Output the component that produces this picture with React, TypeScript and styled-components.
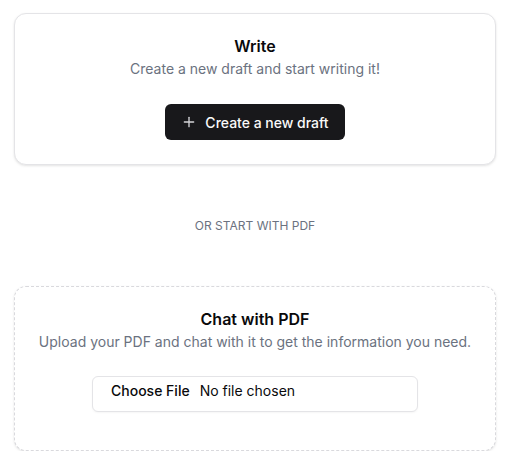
import React from "react";
import styled, { createGlobalStyle } from "styled-components";
import { Plus } from "lucide-react";

const GlobalStyle = createGlobalStyle`
  html, body {
    margin: 0;
    padding: 0;
    background: #ffffff;
  }
  body {
    font-family: Inter, "Noto Sans", "Liberation Sans", sans-serif;
    color: #09090b;
    -webkit-font-smoothing: antialiased;
  }
  * {
    box-sizing: border-box;
  }
`;

const Page = styled.main`
  width: 482px;
  margin: 13px 0 0 14px;
  display: flex;
  flex-direction: column;
`;

const Card = styled.section<{ $dashed?: boolean }>`
  display: flex;
  flex-direction: column;
  align-items: center;
  text-align: center;
  border: 1px ${(p) => (p.$dashed ? "dashed #d9d9dd" : "solid #e4e4e7")};
  border-radius: 12px;
  background: #ffffff;
  box-shadow: 0 1px 3px rgba(0, 0, 0, 0.08), 0 1px 2px rgba(0, 0, 0, 0.04);
  padding: 20px 12px ${(p) => (p.$dashed ? "38px" : "24px")};
`;

const Title = styled.h2`
  margin: 0;
  font-size: 16px;
  line-height: 24px;
  font-weight: 600;
  color: #09090b;
`;

const Subtitle = styled.p`
  margin: 1px 0 0;
  font-size: 14px;
  line-height: 20px;
  color: #6b7280;
  white-space: nowrap;
`;

const PrimaryButton = styled.button`
  margin-top: 25px;
  display: inline-flex;
  align-items: center;
  gap: 8px;
  height: 36px;
  padding: 0 16px;
  border: 0;
  border-radius: 6px;
  background: #18181b;
  color: #fafafa;
  font-family: inherit;
  font-size: 14px;
  font-weight: 500;
  cursor: pointer;

  svg {
    color: #d4d4d8;
  }
`;

const Divider = styled.div`
  padding: 53px 0 52px;
  text-align: center;
  font-size: 12px;
  line-height: 16px;
  text-transform: uppercase;
  color: #6b7280;
`;

const FileInput = styled.input`
  margin-top: 24px;
  width: 326px;
  height: 36px;
  padding: 4px 12px;
  border: 1px solid #e4e4e7;
  border-radius: 6px;
  background: #ffffff;
  box-shadow: 0 1px 2px rgba(0, 0, 0, 0.04);
  font-family: inherit;
  font-size: 14px;
  color: #09090b;

  &::file-selector-button {
    border: 0;
    background: transparent;
    font-family: inherit;
    font-size: 14px;
    font-weight: 500;
    color: #09090b;
  }
`;

export default function App() {
  return (
    <>
      <GlobalStyle />
      <Page>
        <Card>
          <Title>Write</Title>
          <Subtitle>Create a new draft and start writing it!</Subtitle>
          <PrimaryButton>
            <Plus size={16} strokeWidth={2} />
            Create a new draft
          </PrimaryButton>
        </Card>
        <Divider>Or start with PDF</Divider>
        <Card $dashed>
          <Title>Chat with PDF</Title>
          <Subtitle>
            Upload your PDF and chat with it to get the information you need.
          </Subtitle>
          <FileInput type="file" accept="application/pdf" />
        </Card>
      </Page>
    </>
  );
}
